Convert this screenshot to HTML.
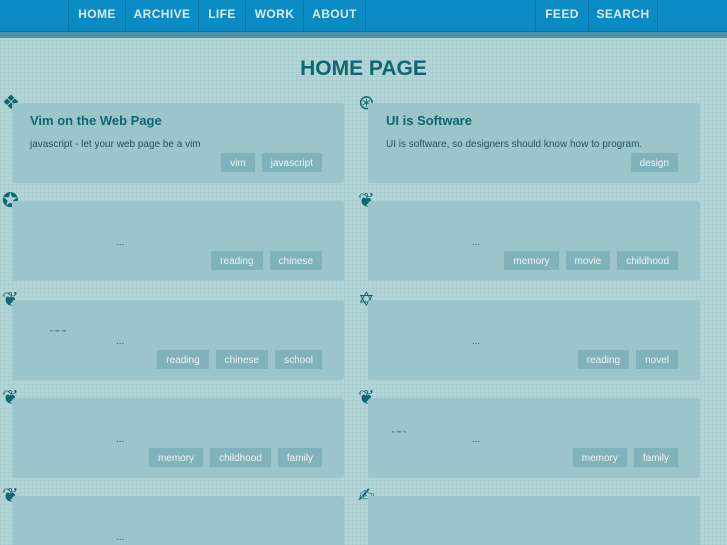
<!DOCTYPE html>
<html><head><meta charset="utf-8"><style>
*{margin:0;padding:0;box-sizing:border-box}
html,body{width:727px;height:545px;overflow:hidden}
body{background:#b3d5d6;font-family:"Liberation Sans",sans-serif;position:relative;
background-image:linear-gradient(rgba(150,190,195,.25) 1px,transparent 1px),linear-gradient(90deg,rgba(150,190,195,.25) 1px,transparent 1px);background-size:4px 4px}
.nav{position:absolute;top:0;left:0;width:727px;height:31px;background:#0b8bc4}
.strip{position:absolute;top:31px;left:0;width:727px;height:7px;background:#4d91a9;border-top:1px solid #0a6f9c}
.nav a{position:absolute;top:0;height:31px;line-height:29px;color:#d8eef8;font-weight:bold;font-size:12px;letter-spacing:.4px;text-align:center;border-left:1px solid #0a72a2;text-decoration:none}
h1{position:absolute;top:57px;left:0;width:727px;text-align:center;font-size:21px;color:#0e6670;font-weight:bold}
.card{position:absolute;width:332px;height:80px;background:#9bc5cb;border-radius:3px}
.card h2{position:absolute;left:18px;top:10px;font-size:13px;color:#0e6670}
.card p{position:absolute;left:18px;top:36px;font-size:10px;color:#24525a}
.dots{position:absolute;left:104px;top:36px;font-size:10px;color:#24525a}
.tags{position:absolute;right:22px;top:50px;display:flex;gap:7px}
.tags span{background:#7fb2ba;color:#eef6f7;font-size:10px;padding:0 9px;height:19px;line-height:21px}
.ic{position:absolute;font-size:20px;color:#0e6670;line-height:1;font-family:"DejaVu Sans",sans-serif}
</style></head><body>
<div class="nav">
<a style="left:68px;width:57px">HOME</a>
<a style="left:125px;width:73px">ARCHIVE</a>
<a style="left:198px;width:47px">LIFE</a>
<a style="left:245px;width:58px">WORK</a>
<a style="left:303px;width:63px;border-right:1px solid #0a72a2">ABOUT</a>
<a style="left:535px;width:53px">FEED</a>
<a style="left:588px;width:70px;border-right:1px solid #0a72a2">SEARCH</a>
</div>
<div class="strip"></div>
<h1>HOME PAGE</h1>

<div class="ic" style="left:2px;top:92px">❖</div>
<div class="card" style="left:12px;top:103px"><h2>Vim on the Web Page</h2><p>javascript - let your web page be a vim</p><div class="tags"><span>vim</span><span>javascript</span></div></div>
<div class="ic" style="left:358px;top:92px">⊛</div>
<div class="card" style="left:368px;top:103px"><h2>UI is Software</h2><p>UI is software, so designers should know how to program.</p><div class="tags"><span>design</span></div></div>

<div class="ic" style="left:2px;top:190px">✪</div>
<div class="card" style="left:12px;top:201px"><div class="dots">...</div><div class="tags"><span>reading</span><span>chinese</span></div></div>
<div class="ic" style="left:358px;top:190px">❦</div>
<div class="card" style="left:368px;top:201px"><div class="dots">...</div><div class="tags"><span>memory</span><span>movie</span><span>childhood</span></div></div>

<div class="ic" style="left:2px;top:289px">❦</div>
<div class="card" style="left:12px;top:300px"><div class="dots" style="left:38px;top:30px;font-size:7px">" "" ""</div><div class="dots">...</div><div class="tags"><span>reading</span><span>chinese</span><span>school</span></div></div>
<div class="ic" style="left:358px;top:289px">✡</div>
<div class="card" style="left:368px;top:300px"><div class="dots">...</div><div class="tags"><span>reading</span><span>novel</span></div></div>

<div class="ic" style="left:2px;top:387px">❦</div>
<div class="card" style="left:12px;top:398px"><div class="dots">...</div><div class="tags"><span>memory</span><span>childhood</span><span>family</span></div></div>
<div class="ic" style="left:358px;top:387px">❦</div>
<div class="card" style="left:368px;top:398px"><div class="dots" style="left:24px;top:33px;font-size:7px">" "" "</div><div class="dots">...</div><div class="tags"><span>memory</span><span>family</span></div></div>

<div class="ic" style="left:2px;top:485px">❦</div>
<div class="card" style="left:12px;top:496px;height:49px;border-radius:3px 3px 0 0"><div class="dots">...</div></div>
<div class="ic" style="left:358px;top:485px">&#x270D;&#xFE0E;</div>
<div class="card" style="left:368px;top:496px;height:49px;border-radius:3px 3px 0 0"></div>
</body></html>
